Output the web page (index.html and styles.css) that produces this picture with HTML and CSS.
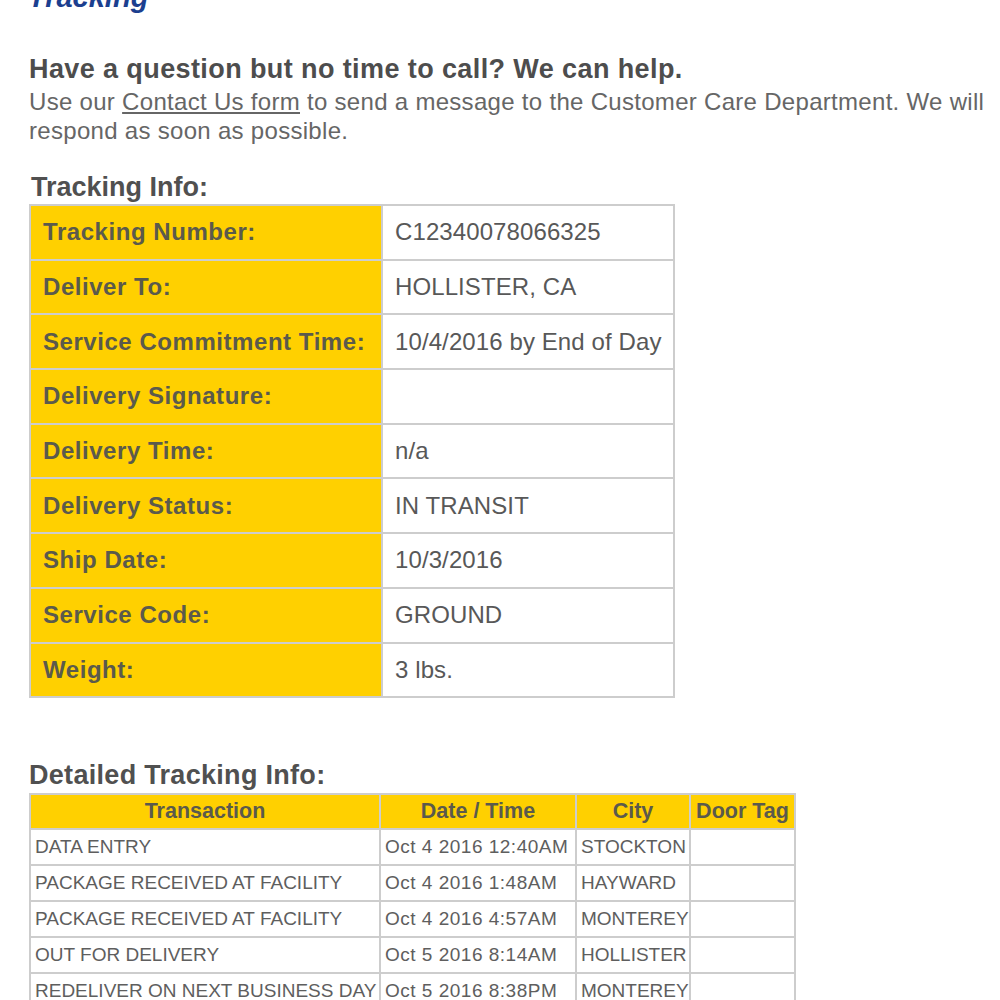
FILE: index.html
```html
<!DOCTYPE html>
<html lang="en">
<head>
<meta charset="utf-8">
<title>Tracking</title>
<link rel="stylesheet" href="styles.css">
</head>
<body>
<div class="page">
  <h1 class="page-title">Tracking</h1>

  <h2 class="help-title">Have a question but no time to call? We can help.</h2>
  <p class="help-text">Use our <a class="help-link" href="#">Contact Us form</a> to send a message to the Customer Care Department. We will respond as soon as possible.</p>

  <h3 class="section-title section-title--info">Tracking Info:</h3>
  <table class="info-table">
    <tbody>
      <tr><th class="info-label">Tracking Number:</th><td class="info-value">C12340078066325</td></tr>
      <tr><th class="info-label">Deliver To:</th><td class="info-value">HOLLISTER, CA</td></tr>
      <tr><th class="info-label">Service Commitment Time:</th><td class="info-value">10/4/2016 by End of Day</td></tr>
      <tr><th class="info-label">Delivery Signature:</th><td class="info-value"></td></tr>
      <tr><th class="info-label">Delivery Time:</th><td class="info-value">n/a</td></tr>
      <tr><th class="info-label">Delivery Status:</th><td class="info-value">IN TRANSIT</td></tr>
      <tr><th class="info-label">Ship Date:</th><td class="info-value">10/3/2016</td></tr>
      <tr><th class="info-label">Service Code:</th><td class="info-value">GROUND</td></tr>
      <tr><th class="info-label">Weight:</th><td class="info-value">3 lbs.</td></tr>
    </tbody>
  </table>

  <h3 class="section-title section-title--detail">Detailed Tracking Info:</h3>
  <table class="detail-table">
    <colgroup>
      <col class="col-transaction">
      <col class="col-date">
      <col class="col-city">
      <col class="col-tag">
    </colgroup>
    <thead>
      <tr><th>Transaction</th><th>Date / Time</th><th>City</th><th>Door Tag</th></tr>
    </thead>
    <tbody>
      <tr><td>DATA ENTRY</td><td class="cell-date">Oct 4 2016 12:40AM</td><td>STOCKTON</td><td></td></tr>
      <tr><td>PACKAGE RECEIVED AT FACILITY</td><td class="cell-date">Oct 4 2016 1:48AM</td><td>HAYWARD</td><td></td></tr>
      <tr><td>PACKAGE RECEIVED AT FACILITY</td><td class="cell-date">Oct 4 2016 4:57AM</td><td>MONTEREY</td><td></td></tr>
      <tr><td>OUT FOR DELIVERY</td><td class="cell-date">Oct 5 2016 8:14AM</td><td>HOLLISTER</td><td></td></tr>
      <tr><td>REDELIVER ON NEXT BUSINESS DAY</td><td class="cell-date">Oct 5 2016 8:38PM</td><td>MONTEREY</td><td></td></tr>
    </tbody>
  </table>
</div>
</body>
</html>
```

FILE: styles.css
```css
html, body {
  margin: 0;
  padding: 0;
  background: #ffffff;
}

body {
  font-family: "Liberation Sans", Arial, sans-serif;
  color: #5a5a5a;
  overflow: hidden;
}

.page {
  padding: 0 8px 40px 29px;
}

.page-title {
  margin: -17px 0 0 -1px;
  font-size: 29px;
  line-height: 29px;
  font-weight: bold;
  font-style: italic;
  color: #1c3f8f;
}

.help-title {
  margin: 42px 0 0;
  font-size: 27px;
  line-height: 30px;
  font-weight: bold;
  color: #4d4d4d;
  letter-spacing: 0.4px;
}

.help-text {
  margin: 3px 0 0;
  font-size: 24px;
  line-height: 29px;
  color: #666666;
  letter-spacing: 0.3px;
}

.help-link {
  color: #666666;
  text-decoration: underline;
}

.section-title {
  margin: 0;
  font-size: 27px;
  line-height: 30px;
  font-weight: bold;
  color: #505050;
}

.section-title--info {
  margin-top: 27px;
  padding-left: 2px;
}

.section-title--detail {
  margin-top: 62px;
  letter-spacing: 0.3px;
}

.info-table {
  margin-top: 2px;
  border-collapse: collapse;
  width: 646px;
  table-layout: fixed;
}

.info-table tr {
  height: 54.7px;
}

.info-label,
.info-value {
  border: 2px solid #cdcdcd;
  font-size: 24px;
  text-align: left;
  vertical-align: middle;
  padding: 0 0 0 12px;
}

.info-label {
  width: 338px;
  background: #ffd000;
  font-weight: bold;
  color: #5b5a4c;
  letter-spacing: 0.55px;
}

.info-value {
  background: #ffffff;
  font-weight: normal;
  color: #585858;
  letter-spacing: 0.1px;
}

.detail-table {
  margin-top: 3px;
  border-collapse: collapse;
  table-layout: fixed;
  width: 765px;
}

.col-transaction { width: 350px; }
.col-date { width: 196px; }
.col-city { width: 114px; }
.col-tag { width: 105px; }

.detail-table th,
.detail-table td {
  border: 2px solid #cdcdcd;
  white-space: nowrap;
  overflow: hidden;
  vertical-align: middle;
}

.detail-table thead tr {
  height: 35px;
}

.detail-table tbody tr {
  height: 36px;
}

.detail-table th {
  background: #ffd000;
  font-size: 21.5px;
  font-weight: bold;
  text-align: center;
  color: #5b5a4c;
  padding: 0 2px;
}

.detail-table td {
  font-size: 19px;
  color: #5e5e5e;
  padding: 0 0 0 4px;
  text-align: left;
}

.detail-table .cell-date {
  letter-spacing: 0.5px;
}
```
